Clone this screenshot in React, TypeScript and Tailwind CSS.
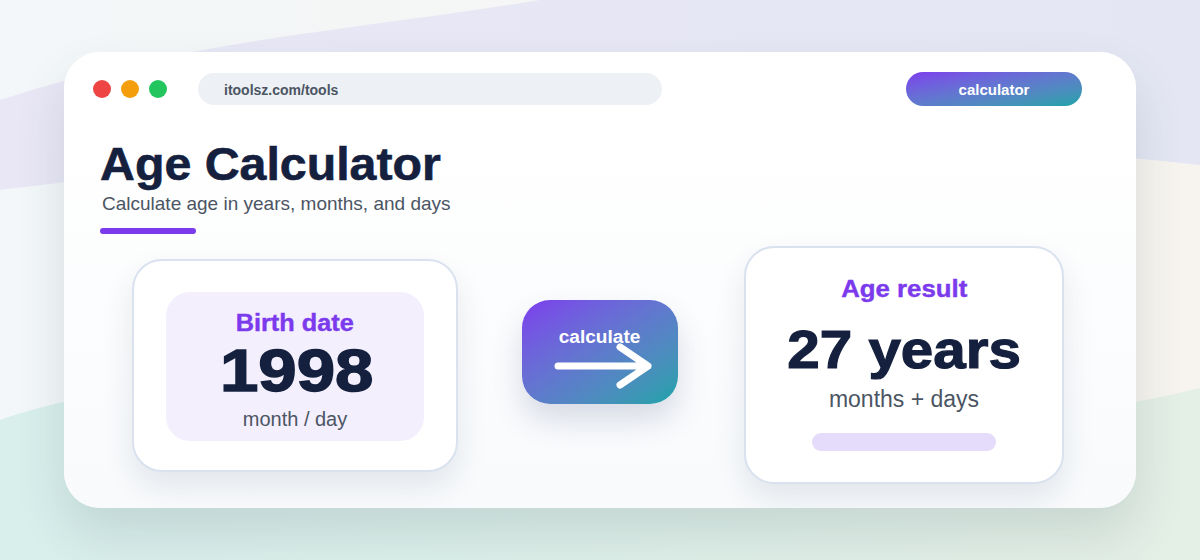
import React from "react";

const font = { fontFamily: '"Liberation Sans", Arial, sans-serif' };

function Backdrop() {
  return (
    <svg className="absolute inset-0 h-full w-full" viewBox="0 0 1200 560" preserveAspectRatio="none">
      <defs>
        <linearGradient id="mint" x1="0" y1="0" x2="1" y2="0">
          <stop offset="0" stopColor="#d8efec" />
          <stop offset="1" stopColor="#e4efe6" />
        </linearGradient>
        <linearGradient id="lav" x1="0" y1="0" x2="1" y2="0">
          <stop offset="0" stopColor="#e9e7f6" />
          <stop offset="1" stopColor="#e4e6f3" />
        </linearGradient>
        <linearGradient id="cream" x1="0" y1="0" x2="1" y2="0">
          <stop offset="0" stopColor="#f3f7f9" />
          <stop offset="1" stopColor="#f7f4ef" />
        </linearGradient>
      </defs>
      <rect width="1200" height="560" fill="url(#cream)" />
      <path d="M0 100 C 180 40, 360 30, 540 0 L 1200 0 L 1200 165 C 900 130, 400 140, 0 190 Z" fill="url(#lav)" />
      <path d="M0 420 C 260 330, 700 400, 1000 420 C 1100 410, 1150 400, 1200 388 L 1200 560 L 0 560 Z" fill="url(#mint)" />
    </svg>
  );
}

export default function App() {
  return (
    <div className="relative h-[560px] w-[1200px] overflow-hidden" style={font}>
      <Backdrop />

      {/* Browser window */}
      <div className="relative ml-[64px] mt-[52px] flex h-[456px] w-[1072px] flex-col overflow-hidden rounded-[36px] bg-[#f9fafc] shadow-[0_26px_50px_rgba(40,70,80,0.14)]">
        {/* Header */}
        <div className="flex h-[74px] shrink-0 items-center bg-white pl-[29px] pr-[54px]">
          <div className="flex gap-[10px]">
            <span className="h-[18px] w-[18px] rounded-full bg-[#ef4444]" />
            <span className="h-[18px] w-[18px] rounded-full bg-[#f59e0b]" />
            <span className="h-[18px] w-[18px] rounded-full bg-[#22c55e]" />
          </div>
          <div className="ml-[31px] flex h-[32px] w-[464px] items-center rounded-full bg-[#edf0f5] pl-[26px] pt-[2px] text-[14px] font-bold text-[#4b5563]">
            itoolsz.com/tools
          </div>
          <div className="ml-auto flex h-[34px] w-[176px] items-center justify-center rounded-full bg-linear-to-br from-[#7c3aed] to-[#14a3a8] pt-[2px] text-[15px] font-bold text-white">
            calculator
          </div>
        </div>

        {/* Body */}
        <div className="flex flex-1 flex-col bg-linear-to-b from-white to-[#f8fafc] pl-[36px]">
          <h1 className="mt-[15px] origin-left scale-x-[1.05] text-[46px] leading-none font-bold text-[#14203d] [-webkit-text-stroke:0.6px_#14203d]">
            Age Calculator
          </h1>
          <p className="mt-[7px] pl-[2px] text-[19px] leading-none text-[#4b5563]">
            Calculate age in years, months, and days
          </p>
          <div className="mt-[15px] h-[6px] w-[96px] rounded-full bg-[#7c3aed]" />

          <div className="mt-[12px] flex items-center pl-[32px]">
            {/* Birth card */}
            <div className="flex h-[213px] w-[326px] items-center justify-center rounded-[30px] border-2 border-[#d9e2ee] bg-white shadow-[0_14px_30px_rgba(30,50,80,0.10)]">
              <div className="mt-[2px] flex h-[149px] w-[258px] flex-col items-center rounded-[24px] bg-[#f3effd] pt-[20px]">
                <span className="inline-block scale-x-[1.1] text-[23px] leading-none font-bold text-[#7c3aed] [-webkit-text-stroke:0.4px_#7c3aed]">
                  Birth date
                </span>
                <span className="mt-[6px] ml-[4px] inline-block scale-x-[1.15] text-[60px] leading-none font-bold text-[#14203d] [-webkit-text-stroke:1.5px_#14203d]">
                  1998
                </span>
                <span className="mt-[8px] text-[20px] leading-none text-[#4b5563]">month / day</span>
              </div>
            </div>

            {/* Calculate button */}
            <div className="mb-[26px] ml-[64px] flex h-[104px] w-[156px] flex-col items-center rounded-[28px] bg-linear-to-br from-[#7c3aed] to-[#14a3a8] pt-[28px] shadow-[0_16px_30px_rgba(60,70,120,0.18)]">
              <span className="inline-block scale-x-[1.06] text-[18px] leading-none font-bold text-white">calculate</span>
              <svg width="104" height="52" viewBox="0 0 104 52" className="mt-[-8px] ml-[8px]">
                <path d="M6 28 H96 M68 9 L96 28 L68 47" fill="none" stroke="white" strokeWidth="7" strokeLinecap="round" strokeLinejoin="round" />
              </svg>
            </div>

            {/* Result card */}
            <div className="ml-[66px] flex h-[238px] w-[320px] flex-col items-center rounded-[30px] border-2 border-[#d9e2ee] bg-white pt-[30px] shadow-[0_14px_30px_rgba(30,50,80,0.10)]">
              <span className="inline-block scale-x-[1.12] text-[23px] leading-none font-bold text-[#7c3aed] [-webkit-text-stroke:0.4px_#7c3aed]">
                Age result
              </span>
              <span className="mt-[21px] inline-block scale-x-[1.08] text-[54px] leading-none font-bold text-[#14203d] [-webkit-text-stroke:1.2px_#14203d]">
                27 years
              </span>
              <span className="mt-[12px] text-[23px] leading-none text-[#4b5563]">months + days</span>
              <div className="mt-[22px] h-[18px] w-[184px] rounded-full bg-[#e5dbfa]" />
            </div>
          </div>
        </div>
      </div>
    </div>
  );
}
